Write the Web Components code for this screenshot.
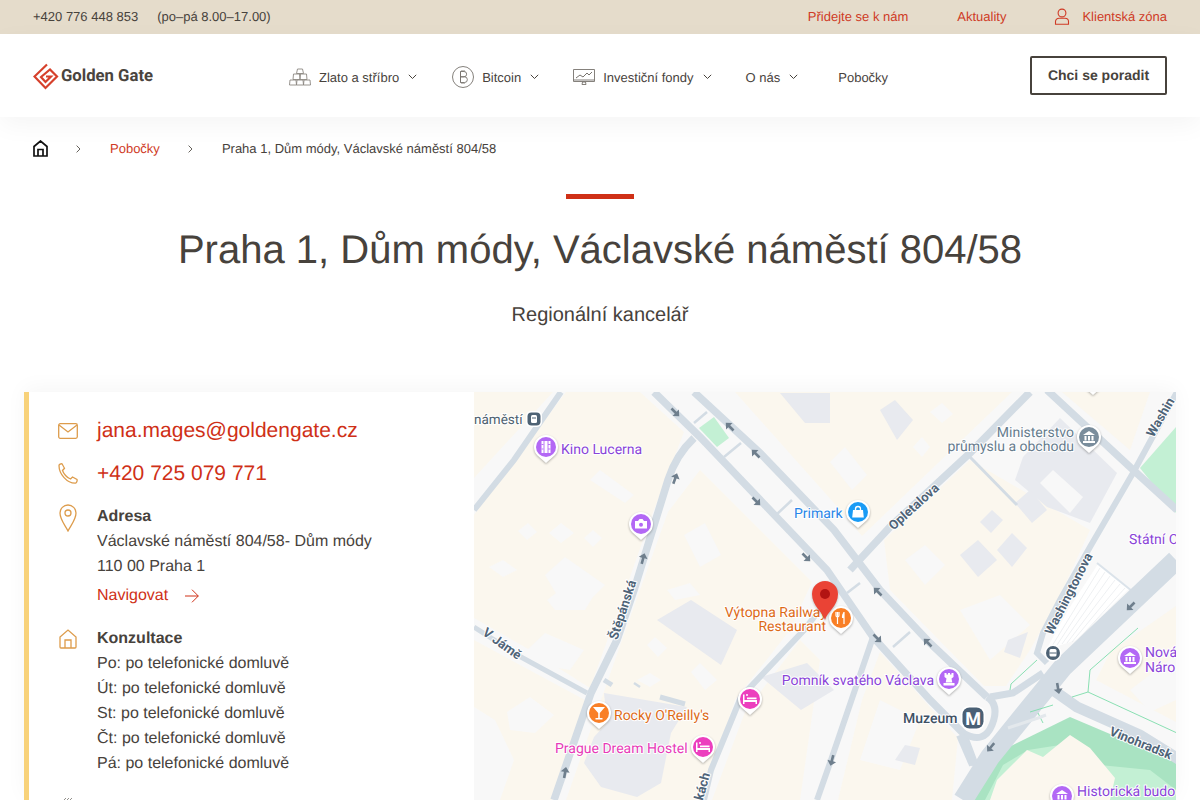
<!DOCTYPE html>
<html lang="cs">
<head>
<meta charset="utf-8">
<title>Praha 1, Dům módy</title>
<style>
html, body { margin: 0; height: 800px; overflow: hidden; background: #fff; }
body { font-family: "Liberation Sans", Arial, sans-serif; color: #47423c; text-rendering: geometricPrecision; }
</style>
</head>
<body>
<gg-topbar></gg-topbar>
<gg-header></gg-header>
<gg-breadcrumbs></gg-breadcrumbs>
<gg-title sub="Regionální kancelář">Praha 1, Dům módy, Václavské náměstí 804/58</gg-title>
<gg-branch></gg-branch>

<script>
var chev = '<svg width="9" height="6" viewBox="0 0 9 6" fill="none" stroke="#47423c" stroke-width="1"><path d="M.8.8l3.7 3.7L8.200.8"/></svg>';

customElements.define('gg-topbar', class extends HTMLElement {
    constructor() {
        super();
        this.attachShadow({ mode: 'open' }).innerHTML = `
<style>
:host{display:flex;height:34px;box-sizing:border-box;padding:0 33px 2px;align-items:center;background:#e5dccb;font-size:13px;color:#47423c}
.tel{margin-right:19px}
.r{margin-left:auto;display:flex;align-items:center}
a{color:#cf3a25;text-decoration:none}
.n{margin-left:49px}
svg{display:block;margin:1px 12px 0 48px}
</style>
<span class="tel">+420 776 448 853</span><span>(po–pá 8.00–17.00)</span>
<div class="r">
<a>Přidejte se k nám</a><a class="n">Aktuality</a>
<svg width="16" height="17" viewBox="0 0 16 17" fill="none" stroke="#cf3a25" stroke-width="1.1"><circle cx="8" cy="5" r="3.900"/><path d="M1.500 16.300h13v-2.800c0-2-1.700-3.300-3.500-3.300h-6c-1.800 0-3.500 1.300-3.500 3.300z"/></svg>
<a>Klientská zóna</a>
</div>`;
    }
});

customElements.define('gg-nav-item', class extends HTMLElement {
    constructor() {
        super();
        this.attachShadow({ mode: 'open' }).innerHTML = `
<style>
:host{display:flex;align-items:center;font-size:13px;color:#47423c}
.c{display:flex;margin-left:9px}
::slotted(svg){margin-right:8px;display:block}
</style>
<slot name="icon"></slot><slot></slot><span class="c"></span>`;
    }
    connectedCallback() {
        if (this.hasAttribute('drop')) this.shadowRoot.querySelector('.c').innerHTML = chev;
    }
});

customElements.define('gg-header', class extends HTMLElement {
    constructor() {
        super();
        this.attachShadow({ mode: 'open' }).innerHTML = `
<style>
:host{display:flex;position:relative;z-index:2;height:83px;background:#fff;padding:0 33px;box-shadow:0 8px 24px rgba(0,0,0,.045)}
.logo{display:flex;align-items:center;width:256px;height:83px}
.logo b{font:700 16.700px Roboto,sans-serif;color:#4a443e;padding-top:2px}
nav{display:flex;align-items:center;height:86px}
.btn{margin:22px 0 0 auto;height:39px;box-sizing:border-box;width:137px;border:2px solid #47423c;border-radius:2px;display:flex;align-items:center;justify-content:center;font-weight:700;font-size:14px;color:#47423c;padding-bottom:2px}
</style>
<div class="logo">
<svg width="28" height="27" viewBox="0 0 28 27" fill="none" stroke="#d6402b" stroke-width="2.200" style="margin-top:1px"><path d="M14 1.500L1.500 13.500 12.500 25 24 13.500 17 6.500 8 14l4.500 5 5.500-5.500h-5"/></svg>
<b>Golden Gate</b>
</div>
<nav>
<gg-nav-item drop style="margin-right:35px"><svg slot="icon" width="22" height="18" viewBox="0 0 22 18" fill="none" stroke="#8c8882" stroke-width=".9"><path d="M8.500 1h5l1 4.500h-7zM4.500 6h6l.5 5.500H4zM11.500 6h6l.5 5.500h-7zM1 12h6l.5 5H.5zM8 12h6l.5 5h-7zM15 12h6l.5 5h-7z"/></svg>Zlato a stříbro</gg-nav-item>
<gg-nav-item drop style="margin-right:34px"><svg slot="icon" width="22" height="22" viewBox="0 0 22 22" fill="none" stroke="#77736d" stroke-width=".9"><circle cx="11" cy="11" r="10.500"/><path d="M8.500 5.500h3.500a2.500 2.500 0 0 1 0 5.300H8.500zM8.500 10.800h4a2.800 2.800 0 0 1 0 5.700h-4zM8.500 5.500v11M10 4v1.500M12 4v1.500M10 16.500V18M12 16.500V18"/></svg>Bitcoin</gg-nav-item>
<gg-nav-item drop style="margin-right:34px"><svg slot="icon" width="22" height="16" viewBox="0 0 22 16" fill="none" stroke="#77736d" stroke-width=".9"><path d="M.5.500h21v12H.5zM.5 11h21M9 15.500h4l-.5-2.500h-3z"/><path d="M3 9l4-3 3 2 4-4 2 2 3-3" stroke-width="1"/></svg>Investiční fondy</gg-nav-item>
<gg-nav-item drop style="margin-right:40px">O nás</gg-nav-item>
<gg-nav-item>Pobočky</gg-nav-item>
</nav>
<a class="btn">Chci se poradit</a>`;
    }
});

customElements.define('gg-breadcrumbs', class extends HTMLElement {
    constructor() {
        super();
        var sep = '<svg class="s" width="5" height="8" viewBox="0 0 5 8" fill="none" stroke="#55504a" stroke-width=".9"><path d="M.6.600L4 4 .6 7.400"/></svg>';
        this.attachShadow({ mode: 'open' }).innerHTML = `
<style>
:host{display:flex;align-items:center;height:63px;padding:0 33px;font-size:13px;color:#47423c}
a{color:#cf3a25}
.s{margin:0 29px 0 28px;display:block}
</style>
<svg width="15" height="17" viewBox="0 0 15 17" fill="none" stroke="#111" stroke-width="1.700" style="display:block"><path d="M1 16V6.500L7.500 1 14 6.500V16zM5 16V9.500h5V16"/></svg>
${sep}<a>Pobočky</a>${sep}<span>Praha 1, Dům módy, Václavské náměstí 804/58</span>`;
    }
});

customElements.define('gg-title', class extends HTMLElement {
    constructor() {
        super();
        this.attachShadow({ mode: 'open' }).innerHTML = `
<style>
:host{display:block;text-align:center;height:212px;padding-top:14px;box-sizing:border-box;color:#47423c}
i{display:block;width:68px;height:5px;background:#cf3017;margin:0 auto 25px}
h1{margin:0;font-weight:400;font-size:40px;line-height:52px}
p{margin:27px 0 0;font-size:20px;line-height:24px}
</style>
<i></i><h1><slot></slot></h1><p></p>`;
    }
    connectedCallback() {
        this.shadowRoot.querySelector('p').textContent = this.getAttribute('sub');
    }
});

customElements.define('gg-contact-row', class extends HTMLElement {
    constructor() {
        super();
        this.attachShadow({ mode: 'open' }).innerHTML = `
<style>
:host{display:flex}
.i{width:39px;flex:none;display:block}
.t{flex:1}
</style>
<div class="i"><slot name="icon"></slot></div><div class="t"><slot></slot></div>`;
    }
});

customElements.define('gg-contact', class extends HTMLElement {
    constructor() {
        super();
        var ic = 'fill="none" stroke="#dd9c4c" stroke-width="1.300"';
        this.attachShadow({ mode: 'open' }).innerHTML = `
<style>
:host{display:block;box-sizing:border-box;width:450px;height:408px;background:#fff;border-left:5px solid #f8d27a;padding:17px 0 0 29px;font-size:16px;line-height:25px;color:#47423c;overflow:hidden}
.big{font-size:21px;line-height:43px;color:#cf3017}
a{color:#cf3017}
b{display:block}
svg{display:block}
.nav{display:flex;align-items:center;margin-top:4px}
.nav svg{margin-left:17px}
.a{margin-top:9px}
.k{margin-top:18px}
.h{margin-top:21px}
</style>
<gg-contact-row class="big"><svg slot="icon" width="20" height="16" viewBox="0 0 20 16" ${ic} style="margin-top:14px"><rect x=".7" y=".7" width="18.600" height="14.600" rx="1.500"/><path d="M1 2l9 7 9-7"/></svg>jana.mages@goldengate.cz</gg-contact-row>
<gg-contact-row class="big"><svg slot="icon" width="20" height="21" viewBox="0 0 20 21" ${ic} style="margin-top:11px"><path d="M1 2.500C1 1.500 3 .5 4 .8l2.500 4.500-2 2.200c1 3 4.500 7.500 8 8.500l2-2 4.500 2.500c.5 1-.5 3.500-1.500 3.700C9 20.500 1 11 1 2.500z"/></svg>+420 725 079 771</gg-contact-row>
<gg-contact-row class="a"><svg slot="icon" width="18" height="28" viewBox="0 0 18 28" ${ic} style="margin-left:1px"><path d="M9 27C6 21 1 15.500 1 9a8 8 0 0 1 16 0c0 6.500-5 12-8 18z"/><circle cx="9" cy="9" r="3"/></svg><b>Adresa</b>Václavské náměstí 804/58- Dům módy<br>110 00 Praha 1
<a class="nav">Navigovat<svg width="14" height="14" viewBox="0 0 14 14" fill="none" stroke="#cf3017" stroke-width="1"><path d="M0 7h13.300M7 .7L13.300 7 7 13.300"/></svg></a></gg-contact-row>
<gg-contact-row class="k"><svg slot="icon" width="18" height="20" viewBox="0 0 18 20" ${ic} style="margin:3px 0 0 1px"><path d="M1 18V8l8-7 8 7v10a1 1 0 0 1-1 1H2a1 1 0 0 1-1-1zM6 19v-8h6v8"/></svg><b>Konzultace</b>Po: po telefonické domluvě<br>Út: po telefonické domluvě<br>St: po telefonické domluvě<br>Čt: po telefonické domluvě<br>Pá: po telefonické domluvě</gg-contact-row>
<gg-contact-row class="h"><svg slot="icon" width="12" height="8" viewBox="0 0 12 8" fill="none" stroke="#77736d" stroke-width=".8" style="margin-left:4px"><path d="M1 4l3-3M4 4l3-3M7 4l3-3"/></svg></gg-contact-row>`;
    }
});

// mapa: vsechno v souradnicich stranky, viewBox je posunuty
customElements.define('gg-map', class extends HTMLElement {
    constructor() {
        super();
        this.attachShadow({ mode: 'open' }).innerHTML = `
<style>
:host{display:block;width:702px;height:408px;overflow:hidden;background:#f8f8f8}
svg{display:block}
text{font-family:Roboto,sans-serif}
.halo{paint-order:stroke;stroke:#fff;stroke-width:2px;stroke-linejoin:round}
.rd{font-size:13px;font-weight:700;fill:#4f6478}
</style>
<svg width="702" height="408" viewBox="474 392 702 408">${this.blocks()}${this.roads()}${this.arrows()}${this.labels()}${this.pins()}</svg>`;
    }

    blocks() {
        var cream = ['474,392 553,392 474,478', '566,392 640,392 684,432 650,520 622,600 590,688 530,650 474,618 474,515',
            '474,640 585,700 552,800 474,800', '668,512 700,470 812,582 790,630 735,700 702,800 566,800 622,640',
            '735,392 1012,392 862,536 842,512', '884,540 970,460 1090,530 1058,600 1030,650 1006,686 984,686 890,590',
            '1062,392 1150,392 1130,450', '1110,652 1176,606 1176,722 1096,680', '880,652 958,738 952,800 838,800 862,700',
            '712,800 745,712 800,640 820,660 800,800'];
        var light = ['489,567 503,560 517,570 503,577', '518,531 528,523 537,532 527,540', '549,533 561,523 574,533 561,543', '584,538 593,530 602,538 593,547',
            '545,575 565,557 605,585 590,600 560,600', '590,480 600,470 634,495 625,503', '684,535 705,523 721,555 700,567', '667,590 690,583 700,595 675,600',
            '547,600 560,590 594,595 585,610 555,610', '527,650 545,633 584,650 570,670 540,665', '507,712 530,697 554,715 535,733 510,730', '474,707 495,720 514,760 500,800 474,800',
            '647,645 655,637 667,648 658,657', '691,672 700,663 717,680 705,690', '637,680 650,673 661,680 650,687',
            '930,412 942,403 953,414 942,423', '913,447 922,437 930,447 922,457', '830,462 845,447 867,475 852,490', '905,560 925,545 945,565 925,585',
            '960,610 1000,595 1030,625 990,660', '880,700 920,720 900,770 860,760', '1130,690 1176,655 1176,700 1150,712'];
        var grey = ['1060,418 1117,473 1090,523 1047,507 1015,480 1023,457', '691,600 737,630 721,665 657,620', '604,693 687,707 671,733 661,783 637,797 601,787 584,763 594,737 607,723',
            '761,677 807,663 834,690 801,710', '780,393 830,393 830,423 805,423', '880,410 895,400 913,420 897,440', '960,555 978,540 997,560 978,577', '997,550 1012,533 1027,548 1012,567',
            '980,522 992,510 1003,520 991,533', '1015,503 1030,490 1047,510 1032,523', '905,745 920,748 915,765 895,760', '1008,640 1028,632 1020,658 1004,652'];
        var s = '<rect x="474" y="392" width="702" height="408" fill="#f8f8f8"/>';
        cream.forEach(p => s += `<polygon points="${p}" fill="#fbf7ee"/>`);
        light.forEach(p => s += `<polygon points="${p}" fill="#f8f8f8"/>`);
        grey.forEach(p => s += `<polygon points="${p}" fill="#e8eaef"/>`);
        s += '<polygon points="1040,483 1053,470 1083,497 1070,513" fill="#f8f8f8"/>';
        s += '<polygon points="699,428 714,417 729,438 717,447" fill="#c3f0d4"/>';
        s += '<polygon points="1140,468 1176,427 1176,513" fill="#c3f0d4"/>';
        // park
        s += '<polygon points="973,800 985,770 1003,750 1070,717 1176,762 1176,800" fill="#a9e3c2"/>';
        s += '<polygon points="1003,765 1028,750 1060,745 1100,765 1150,770 1176,790 1176,800 985,800" fill="#c3f0d4"/>';
        s += '<polygon points="997,780 1027,750 1043,757 1070,735 1090,748 1115,778 1110,800 990,800" fill="#fbf7ee"/>';
        // nadrazi
        s += '<polygon points="1098,564 1130,588 1076,640 1046,650 1068,610" fill="#fff"/>';
        for (var i = 0; i < 6; i++) s += `<path d="M${1100 + i * 5} ${568 + i * 4}L${1052 + i * 5} ${646 - i * 1}" stroke="#e6e9ed" stroke-width=".7"/>`;
        s += '<path d="M1097 563l35 28-4 8" fill="none" stroke="#dbe3ea" stroke-width="2"/>';
        return s;
    }

    roads() {
        var list = [
            ['M561 392L514 460 474 510', 6], ['M474 627L521 657 587 693', 5], ['M654 392L700 437 827 570 873 637 930 700 963 733 975 765', 7.500],
            ['M694 392L760 453 834 530 880 590 930 643 987 697', 7.500], ['M694 438Q676 455 668 480L634 590 617 640 591 693 554 800', 7.500],
            ['M1030 392L970 453 890 527 850 570', 7.500], ['M970 457L1017 505', 3], ['M1177 392L1133 473 1090 547 1060 600 1043 633 1037 653 1047 663', 6],
            ['M1047 390L1130 467 1177 510', 7.500], ['M835 590L804 630 741 697 711 770 704 800', 6], ['M873 637L830 763 817 800', 6],
            ['M1053 690L1077 707 1140 735 1180 760', 11], ['M1176 560L1063 667 990 757 963 800', 20],
            ['M987 697Q1000 705 992 725T963 733', 7], ['M990 697L1013 693 1043 673', 7], ['M960 735L973 765', 8],
            ['M694 423L707 412', 2.500], ['M724 457L741 443', 2.500], ['M776 515L792 500', 2.500], ['M893 647L910 632', 2.500], ['M847 593L860 583', 2.500],
            ['M604 680l8 5', 5], ['M634 683l6 4', 2.500], ['M660 697l25 7', 5]
        ];
        var s = '';
        list.forEach(r => s += `<path d="${r[0]}" fill="none" stroke="#d3dce4" stroke-width="${r[1]}"/>`);
        // zelene linky (tramvaj)
        s += '<path d="M1010 690l1-6 26-24M1138 628l-48 42-2 22-16 5M1088 692l89 41M1030 712l23-7M1038 713l5 10" fill="none" stroke="#7ddcaa" stroke-width=".9"/>';
        s += '<path d="M1008 728l30-10 8-3" fill="none" stroke="#e3e8ec" stroke-width="3"/>';
        return s;
    }

    arrows() {
        var a = [[675, 412, 135], [730, 427, -45], [756, 454, -45], [756, 501, 135], [806, 557, 135], [675, 479, 20], [643, 559, 15], [878, 592, -45],
            [565, 773, 10], [877, 638, 135], [928, 643, -45], [1058, 688, 170], [991, 747, 220], [1131, 606, 225], [832, 760, 195]];
        return a.map(p => `<path transform="translate(${p[0]} ${p[1]}) rotate(${p[2]})" d="M0-6l4.500 5H1.300v6h-2.600v-6h-3.200z" fill="#6f7f8d"/>`).join('');
    }

    labels() {
        var rd = [['Opletalova', 914, 507, -42, 'middle'], ['Štěpánská', 623, 610, -72, 'middle'], ['V Jámě', 502, 644, 36, 'middle'], ['Washingtonova', 1069, 594, -63, 'middle'],
            ['Washin', 1150, 436, -60, 'start'], ['Vinohradsk', 1110, 731, 22, 'start'], ['kách', 699, 800, -75, 'start']];
        var s = rd.map(r => `<text class="rd halo" text-anchor="${r[4]}" transform="translate(${r[1]} ${r[2]}) rotate(${r[3]})" dy="4">${r[0]}</text>`).join('');
        var t = [['náměstí', 474, 424, '#4e5f6e', 13.500, 'start'], ['Kino Lucerna', 561, 454, '#8a44d8', 14, 'start'], ['Primark', 794, 518, '#2a86e8', 14, 'start'],
            ['Ministerstvo', 1074, 437, '#667c8d', 14, 'end'], ['průmyslu a obchodu', 1074, 451, '#667c8d', 14, 'end'], ['Státní O', 1129, 544, '#8a44d8', 14, 'start'],
            ['Výtopna Railway', 827, 617, '#dd6a17', 14, 'end'], ['Restaurant', 826, 631, '#dd6a17', 14, 'end'], ['Pomník svatého Václava', 934, 685, '#8a44d8', 14, 'end'],
            ['Rocky O\'Reilly\'s', 614, 720, '#dd6a17', 14, 'start'], ['Prague Dream Hostel', 555, 753, '#e73bb8', 14, 'start'], ['Nová', 1145, 657, '#8a44d8', 14, 'start'],
            ['Náro', 1145, 672, '#8a44d8', 14, 'start'], ['Historická budo', 1077, 796, '#8a44d8', 14, 'start']];
        s += t.map(x => `<text class="halo" x="${x[1]}" y="${x[2]}" fill="${x[3]}" font-size="${x[4]}" text-anchor="${x[5]}">${x[0]}</text>`).join('');
        s += '<text class="halo" x="903" y="723" fill="#3f5164" font-size="14" font-weight="500">Muzeum</text>';
        return s;
    }

    pins() {
        var g = {
            film: '<path d="M-4.500-6h9V6h-9z" fill="#fff"/><path d="M-2-6V6M2-6V6M-4.500-2.500h2M2-2.500h2.500M-4.500 2h2M2 2h2.500" stroke="#b368f5" stroke-width=".9"/>',
            cam: '<path d="M-6-3h3l1.500-2h3L3-3h3v7.500H-6z" fill="#fff"/><circle cy=".8" r="2" fill="#b368f5"/>',
            bag: '<path d="M-5-2h10l.8 7.500H-5.800z" fill="#fff"/><path d="M-2.500-2v-1a2.500 2.500 0 0 1 5 0v1" fill="none" stroke="#fff" stroke-width="1.300"/>',
            bank: '<path d="M-6-2L0-6l6 4zM-6 4h12v2H-6zM-4.500-1h2v4.500h-2zM-1-1h2v4.500h-2zM2.500-1h2v4.500h-2z" fill="#fff"/>',
            fork: '<path d="M-3.500-6v5M-5-6v3.500q0 1.500 1.500 1.500t1.500-1.500V-6M-3.500-1v7M3-6v12" stroke="#fff" stroke-width="1.200" fill="none"/><path d="M3-6q-2.500 2-2 6h2z" fill="#fff"/>',
            tower: '<path d="M-4.500-6h2v1.500h1.500V-6h2v1.500h1.500V-6h2v4l-2 1.500.8 4h-6.600l.8-4-2-1.500zM-5.500 4h11v2.500h-11z" fill="#fff"/>',
            bed: '<path d="M-7-4.500h1.500V1H7v4H5.500V3h-11v2H-7z M-3-1.500h9.500V.200H-3z" fill="#fff"/><path d="M-4-4h2M-3-5v2" stroke="#fff"/>',
            glass: '<path d="M-6-6H6L.8 0v5H3.500v1.500h-7V5H-.8V0z" fill="#fff"/>',
            dot: ''
        };
        var list = [[546, 447, '#b368f5', 'film'], [641, 524, '#b368f5', 'cam'], [858, 512, '#1a9bf5', 'bag'], [1089, 437, '#7a8d9c', 'bank'], [1093, 379, '#f97f26', 'dot'],
            [841, 618, '#f97f26', 'fork'], [949, 679, '#b368f5', 'tower'], [599, 713, '#f97f26', 'glass'], [750, 699, '#ec3fbe', 'bed'], [703, 747, '#ec3fbe', 'bed'],
            [1130, 658, '#b368f5', 'bank'], [1062, 796, '#b368f5', 'bank']];
        var s = '';
        list.forEach(p => {
            s += `<g transform="translate(${p[0]} ${p[1]})" style="filter:drop-shadow(0 1px 1px rgba(0,0,0,.3))"><path d="M-8.500 8.500A12 12 0 1 1 8.500 8.500L0 16z" fill="#fff"/><circle r="10" fill="${p[2]}"/>${g[p[3]]}</g>`;
        });
        // male zastavky
        s += '<g transform="translate(534 419)"><rect x="-8" y="-8" width="16" height="16" rx="5" fill="#fff"/><rect x="-6.500" y="-6.500" width="13" height="13" rx="4" fill="#4e6274"/><rect x="-3" y="-4" width="6" height="8" rx="1.500" fill="#fff"/><path d="M-2-1h4" stroke="#4e6274"/></g>';
        s += '<g transform="translate(1053 653)"><circle r="8.500" fill="#fff"/><circle r="7" fill="#4e6274"/><rect x="-3.500" y="-4" width="7" height="7.500" rx="1.500" fill="#fff"/><path d="M-3.500 0h7" stroke="#4e6274"/></g>';
        // metro
        s += '<g transform="translate(973 718)"><rect x="-12" y="-12" width="24" height="24" rx="8" fill="#fff"/><rect x="-10.500" y="-10.500" width="21" height="21" rx="7" fill="#4a6075"/><text text-anchor="middle" y="6.500" font-size="18" font-weight="700" fill="#fff">M</text></g>';
        // hlavni spendlik
        s += '<g style="filter:drop-shadow(0 1px 1px rgba(0,0,0,.25))"><path d="M825 620c-2-8-13-14-13-26a13 13 0 0 1 26 0c0 12-11 18-13 26z" fill="#ea4335"/><circle cx="825" cy="594" r="5" fill="#b31412"/></g>';
        return s;
    }
});

customElements.define('gg-branch', class extends HTMLElement {
    constructor() {
        super();
        this.attachShadow({ mode: 'open' }).innerHTML = `
<style>
:host{display:flex;margin:0 24px;box-shadow:0 -4px 20px rgba(0,0,0,.04)}
</style>
<gg-contact></gg-contact><gg-map></gg-map>`;
    }
});
</script>
</body>
</html>
